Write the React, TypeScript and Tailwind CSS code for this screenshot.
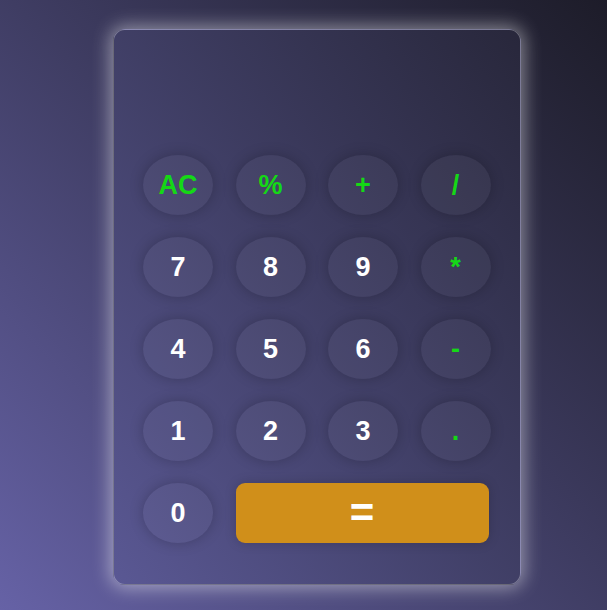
import React from "react";

const keys: { label: string; green?: boolean }[] = [
  { label: "AC", green: true },
  { label: "%", green: true },
  { label: "+", green: true },
  { label: "/", green: true },
  { label: "7" },
  { label: "8" },
  { label: "9" },
  { label: "*", green: true },
  { label: "4" },
  { label: "5" },
  { label: "6" },
  { label: "-", green: true },
  { label: "1" },
  { label: "2" },
  { label: "3" },
  { label: ".", green: true },
  { label: "0" },
];

export default function App() {
  return (
    <div
      className="w-full h-[610px] overflow-hidden bg-gradient-to-tr from-[#6662a6] to-[#1d1c29] pt-[29px] pl-[113px]"
      style={{ fontFamily: '"Liberation Sans", Arial, sans-serif' }}
    >
      <div className="w-[408px] h-[556px] rounded-[12px] border border-white/30 bg-gradient-to-tr from-[#5a5894] to-[#28273b] shadow-[0_0_18px_3px_rgba(255,255,255,0.45)] pt-[125px] pl-[29px]">
        <div className="grid grid-cols-[repeat(4,70px)] gap-x-[22.5px] gap-y-[22px]">
          {keys.map((k) => (
            <button
              key={k.label}
              className={`h-[60px] w-[70px] rounded-[50%] bg-white/[0.04] shadow-[0_0_14px_rgba(0,0,0,0.22)] flex items-center justify-center text-[27px] font-bold leading-none ${
                k.green ? "text-[#15d816]" : "text-white"
              }`}
            >
              {k.label}
            </button>
          ))}
          <button className="col-span-3 justify-self-start w-[253px] h-[60px] rounded-[9px] bg-[#d08f1a] shadow-[0_0_12px_rgba(0,0,0,0.18)] flex items-center justify-center text-[42px] font-bold leading-none text-white">
            =
          </button>
        </div>
      </div>
    </div>
  );
}
